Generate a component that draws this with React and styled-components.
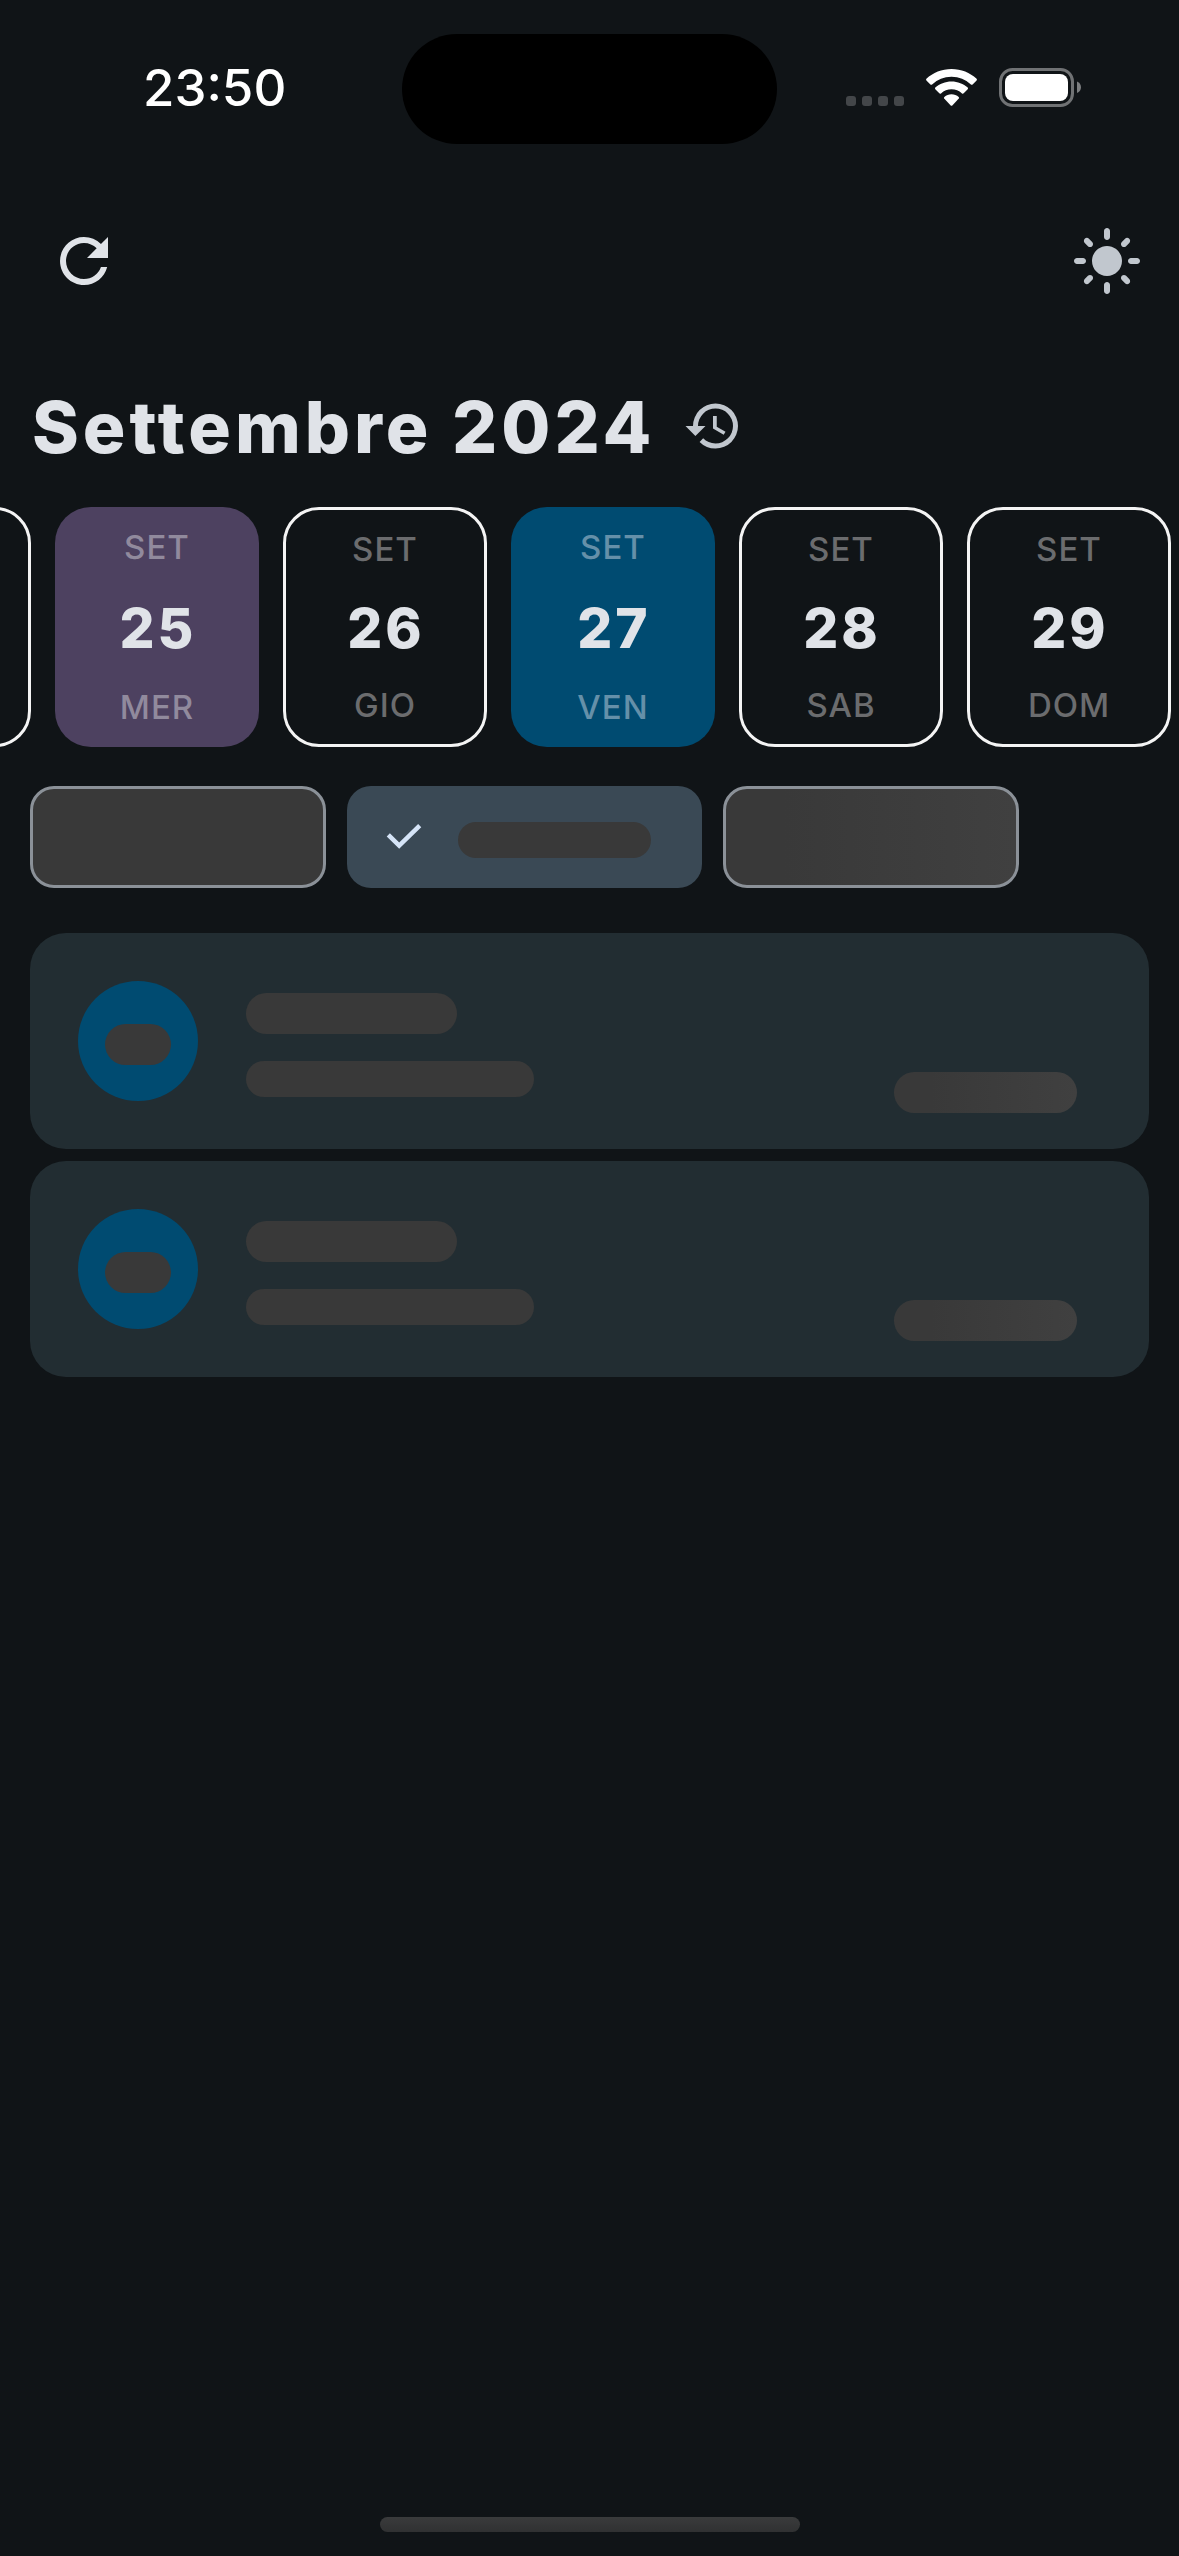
import React, { useState } from "react";
import styled, { createGlobalStyle, css } from "styled-components";

const GlobalStyle = createGlobalStyle`
  *, *::before, *::after { box-sizing: border-box; }
  body {
    margin: 0;
    background: #101417;
    color: #e0e3e8;
    font-family: Inter, Roboto, "Liberation Sans", sans-serif;
    -webkit-font-smoothing: antialiased;
  }
  button {
    margin: 0;
    padding: 0;
    border: 0;
    background: none;
    color: inherit;
    font: inherit;
    cursor: pointer;
  }
  svg { display: block; flex: none; }
`;

const Screen = styled.div`
  display: flex;
  flex-direction: column;
  min-height: 100vh;
  overflow: hidden;
`;

const StatusBar = styled.header`
  display: grid;
  grid-template-columns: 1fr auto 1fr;
  align-items: center;
  padding: 34px 97px 0;
`;

const Clock = styled.time`
  padding: 0 0 2px 46px;
  font-size: 51px;
  line-height: 60px;
  font-weight: 500;
  color: #fff;
`;

const Island = styled.div`
  width: 375px;
  height: 110px;
  border-radius: 55px;
  background: #000;
`;

const StatusIcons = styled.div`
  display: flex;
  justify-content: flex-end;
  align-items: center;
`;

const AppBar = styled.nav`
  display: flex;
  justify-content: space-between;
  align-items: center;
  padding: 81px 36px 0 48px;
`;

const IconButton = styled.button`
  display: flex;
  color: ${(p) => (p.$muted ? "#c1c7ce" : "#e0e3e8")};
`;

const MonthRow = styled.div`
  display: flex;
  align-items: center;
  gap: 28px;
  padding: 84px 32px 0;
`;

const MonthTitle = styled.h1`
  margin: 0;
  padding-top: 2px;
  font-size: 71px;
  line-height: 88px;
  font-weight: 800;
  letter-spacing: 4px;
`;

const DayStrip = styled.div`
  display: flex;
  justify-content: flex-end;
  gap: 24px;
  padding: 36px 8px 0 0;
  overflow: hidden;
`;

const DayCard = styled.button`
  display: flex;
  flex: none;
  flex-direction: column;
  justify-content: space-between;
  align-items: center;
  width: 204px;
  height: 240px;
  border-radius: 36px;
  ${(p) =>
    p.$fill
      ? css`
          padding: 16px 0;
          background: ${p.$fill};
        `
      : css`
          padding: 15px 0;
          border: 3px solid #f4f4f4;
        `}
`;

const DayLabel = styled.span`
  font-size: 33px;
  line-height: 48px;
  font-weight: 500;
  letter-spacing: 1px;
  color: ${(p) => p.$tone || "#6b6c6e"};
`;

const DayNumber = styled.span`
  padding: 2px 0 0 2px;
  font-size: 55px;
  line-height: 66px;
  font-weight: 800;
  letter-spacing: 3px;
`;

const Filters = styled.div`
  display: flex;
  gap: 21px;
  padding: 39px 30px 0;
`;

const shimmer = css`
  background: ${(p) =>
    p.$lit ? "linear-gradient(90deg, #393939 20%, #404040)" : "#393939"};
`;

const Chip = styled.button`
  display: flex;
  align-items: center;
  width: ${(p) => (p.$selected ? 355 : 296)}px;
  height: 102px;
  border-radius: 24px;
  ${(p) =>
    p.$selected
      ? css`
          justify-content: space-between;
          padding: 0 51px 0 33px;
          background: #3a4955;
          color: #d5e4f7;
        `
      : css`
          border: 3px solid #8b9198;
          ${shimmer}
        `}
`;

const Bone = styled.span`
  display: block;
  flex: none;
  width: ${(p) => p.$w}px;
  height: ${(p) => (p.$small ? 36 : 41)}px;
  border-radius: 21px;
  ${shimmer}
`;

const ChipBone = styled(Bone)`
  margin-top: 6px;
`;

const List = styled.ul`
  display: flex;
  flex-direction: column;
  gap: 12px;
  margin: 0;
  padding: 45px 30px 0;
  list-style: none;
`;

const Item = styled.li`
  display: flex;
  gap: 48px;
  height: 216px;
  padding: 48px 72px 36px 48px;
  border-radius: 36px;
  background: #222d32;
`;

const Avatar = styled.div`
  display: flex;
  justify-content: center;
  align-items: center;
  width: 120px;
  height: 120px;
  padding-top: 6px;
  border-radius: 50%;
  background: #004b71;
`;

const ItemText = styled.div`
  display: flex;
  flex: 1;
  flex-direction: column;
  gap: 27px;
  padding-top: 12px;
`;

const ItemMeta = styled.div`
  display: flex;
  align-items: flex-end;
`;

const HomeArea = styled.footer`
  display: flex;
  justify-content: center;
  margin-top: auto;
  padding: 24px 0;
`;

const HomeBar = styled.div`
  width: 420px;
  height: 15px;
  border-radius: 8px;
  background: linear-gradient(#3a3b3c, #303132);
`;

const Glyph = ({ size, d }) => (
  <svg width={size} height={size} viewBox="0 0 24 24" fill="currentColor" aria-hidden="true">
    <path d={d} />
  </svg>
);

const REFRESH =
  "M17.65 6.35A7.958 7.958 0 0 0 12 4c-4.42 0-7.99 3.58-7.99 8s3.57 8 7.99 8c3.73 0 6.84-2.55 7.73-6h-2.08A5.99 5.99 0 0 1 12 18c-3.31 0-6-2.69-6-6s2.69-6 6-6c1.66 0 3.14.69 4.22 1.78L13 11h7V4l-2.35 2.35z";
const SUN =
  "M12 7c-2.76 0-5 2.24-5 5s2.24 5 5 5 5-2.24 5-5-2.24-5-5-5zM2 13h2c.55 0 1-.45 1-1s-.45-1-1-1H2c-.55 0-1 .45-1 1s.45 1 1 1zm18 0h2c.55 0 1-.45 1-1s-.45-1-1-1h-2c-.55 0-1 .45-1 1s.45 1 1 1zM11 2v2c0 .55.45 1 1 1s1-.45 1-1V2c0-.55-.45-1-1-1s-1 .45-1 1zm0 18v2c0 .55.45 1 1 1s1-.45 1-1v-2c0-.55-.45-1-1-1s-1 .45-1 1zM5.99 4.58c-.39-.39-1.03-.39-1.41 0s-.39 1.03 0 1.41l1.06 1.06c.39.39 1.03.39 1.41 0s.39-1.03 0-1.41L5.99 4.58zm12.37 12.37c-.39-.39-1.03-.39-1.41 0s-.39 1.03 0 1.41l1.06 1.06c.39.39 1.03.39 1.41 0 .39-.39.39-1.03 0-1.41l-1.06-1.06zm1.06-10.96c.39-.39.39-1.03 0-1.41s-1.03-.39-1.41 0l-1.06 1.06c-.39.39-.39 1.03 0 1.41s1.03.39 1.41 0l1.06-1.06zM7.05 18.36c.39-.39.39-1.03 0-1.41s-1.03-.39-1.41 0l-1.06 1.06c-.39.39-.39 1.03 0 1.41s1.03.39 1.41 0l1.06-1.06z";
const HISTORY =
  "M13.5 8H12v5l4.28 2.54.72-1.21-3.5-2.08V8M13 3a9 9 0 0 0-9 9H1l3.96 4.03L9 12H6a7 7 0 0 1 7-7 7 7 0 0 1 7 7 7 7 0 0 1-7 7c-1.93 0-3.68-.79-4.94-2.06l-1.42 1.42A8.896 8.896 0 0 0 13 21a9 9 0 0 0 9-9 9 9 0 0 0-9-9";

const CheckMark = () => (
  <svg width="48" height="48" viewBox="0 0 48 48" fill="none" aria-hidden="true">
    <path d="M8.300 21.800L19.200 32.600L39.700 12.700" stroke="currentColor" strokeWidth="4.500" />
  </svg>
);

const StatusGlyphs = () => (
  <svg width="237" height="44" viewBox="845 67 237 44" aria-hidden="true">
    <g fill="#434649">
      <rect x="846" y="96" width="10" height="10" rx="3" />
      <rect x="862" y="96" width="10" height="10" rx="3" />
      <rect x="878" y="96" width="10" height="10" rx="3" />
      <rect x="894" y="96" width="10" height="10" rx="3" />
    </g>
    <g fill="#fff">
      <path d="M951.5 69c9.700 0 18.500 3.600 25.100 9.800.5.500.5 1.100 0 1.600l-4 4c-.5.500-1.200.5-1.700 0A28 28 0 0 0 951.500 76.700 28 28 0 0 0 932.100 84.400c-.5.500-1.200.5-1.700 0l-4-4c-.5-.5-.5-1.100 0-1.600C933 72.600 941.800 69 951.500 69z" />
      <path d="M951.500 81.400c6.200 0 11.900 2.300 16.200 6.200.5.500.5 1.100 0 1.600l-4 4.100c-.5.500-1.100.5-1.700.1a15.700 15.700 0 0 0-21 0c-.6.400-1.200.4-1.700-.1l-4-4.100c-.5-.5-.5-1.100 0-1.600 4.300-3.900 10-6.200 16.200-6.200z" />
      <path d="M951.500 94.300c2.700 0 5.200 1 7.200 2.600.5.500.5 1.100.1 1.600l-6.500 6.900c-.5.500-1.100.5-1.600 0l-6.500-6.900c-.4-.5-.4-1.100.1-1.600 2-1.600 4.500-2.600 7.200-2.600z" />
      <rect x="1005" y="74" width="63" height="27" rx="8" />
    </g>
    <rect x="1000.500" y="69.500" width="72" height="36" rx="12" fill="none" stroke="#707274" strokeWidth="3" />
    <path d="M1077 81.500c2.600 1 4 3.300 4 5.800s-1.400 4.800-4 5.800z" fill="#7c7e80" />
  </svg>
);

const PURPLE = { fill: "#4d4160", tone: "#918a9d" };
const BLUE = { fill: "#004b71", tone: "#6590a9" };

const days = [
  { n: 25, name: "MER", look: PURPLE },
  { n: 26, name: "GIO" },
  { n: 27, name: "VEN", look: BLUE },
  { n: 28, name: "SAB" },
  { n: 29, name: "DOM" },
];

export default function App() {
  const [selected, setSelected] = useState(1);

  return (
    <>
      <GlobalStyle />
      <Screen>
        <StatusBar>
          <Clock>23:50</Clock>
          <Island />
          <StatusIcons>
            <StatusGlyphs />
          </StatusIcons>
        </StatusBar>

        <AppBar>
          <IconButton aria-label="Aggiorna">
            <Glyph size={72} d={REFRESH} />
          </IconButton>
          <IconButton $muted aria-label="Tema">
            <Glyph size={72} d={SUN} />
          </IconButton>
        </AppBar>

        <main>
          <MonthRow>
            <MonthTitle>Settembre 2024</MonthTitle>
            <IconButton $muted aria-label="Oggi">
              <Glyph size={60} d={HISTORY} />
            </IconButton>
          </MonthRow>

          <DayStrip>
            <DayCard aria-label="Giorno precedente" />
            {days.map(({ n, name, look = {} }) => (
              <DayCard key={n} $fill={look.fill}>
                <DayLabel $tone={look.tone}>SET</DayLabel>
                <DayNumber>{n}</DayNumber>
                <DayLabel $tone={look.tone}>{name}</DayLabel>
              </DayCard>
            ))}
          </DayStrip>

          <Filters>
            {[0, 1, 2].map((i) => (
              <Chip
                key={i}
                $selected={selected === i}
                $lit={i === 2}
                aria-pressed={selected === i}
                aria-label={`Filtro ${i + 1}`}
                onClick={() => setSelected(i)}
              >
                {selected === i && (
                  <>
                    <CheckMark />
                    <ChipBone $w={193} $small />
                  </>
                )}
              </Chip>
            ))}
          </Filters>

          <List aria-busy="true">
            {[0, 1].map((i) => (
              <Item key={i}>
                <Avatar>
                  <Bone $w={66} />
                </Avatar>
                <ItemText>
                  <Bone $w={211} />
                  <Bone $w={288} $small />
                </ItemText>
                <ItemMeta>
                  <Bone $w={183} $lit />
                </ItemMeta>
              </Item>
            ))}
          </List>
        </main>

        <HomeArea>
          <HomeBar />
        </HomeArea>
      </Screen>
    </>
  );
}
